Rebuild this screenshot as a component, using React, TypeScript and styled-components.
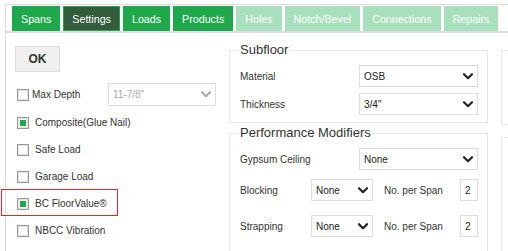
import styled, { createGlobalStyle } from "styled-components";

const GlobalStyle = createGlobalStyle`
    body {
        margin: 0;
        font-family: "Liberation Sans", Arial, sans-serif;
        color: #333;
        background: #fff;
    }
`

const Page = styled.div`
    position: relative;
    width: 508px;
    height: 251px;
    overflow: hidden;
`

const Frame = styled.div`
    margin: 4px 0 0 5px;
    border-top: 1px solid #dedede;
    border-left: 1px solid #dedede;
    height: 246px;
`

const TabBar = styled.div`
    display: flex;
    gap: 3px;
    padding: 1px 0 0 6px;
    border-bottom: 2px solid #dedede;
    white-space: nowrap;
    overflow: hidden;
`

const Tab = styled.div<{ $state: "on" | "off" | "active" }>`
    flex: none;
    height: 25px;
    box-sizing: border-box;
    padding: 0 8px;
    display: flex;
    align-items: center;
    font-size: 10.7px;
    color: #fff;
    background: ${p => p.$state === "active" ? "#325c3c" : p.$state === "on" ? "#1fa94c" : "#a8dfbc"};
    border: 1px solid ${p => p.$state === "off" ? "#a8dfbc" : "#1fa94c"};
`

const Content = styled.div`
    display: flex;
    align-items: flex-start;
`

const LeftCol = styled.div`
    width: 223px;
    flex: none;
    box-sizing: border-box;
    padding: 13px 0 0 9px;
`

const OkButton = styled.button`
    width: 45px;
    height: 26px;
    background: #f0f0f0;
    border: 1px solid #ddd;
    font-family: inherit;
    font-size: 12px;
    font-weight: bold;
    color: #333;
    padding: 0;
`

const DepthRow = styled.div`
    margin-top: 11px;
    height: 23px;
    display: grid;
    grid-template-columns: 93px 108px;
    align-items: center;
`

const CheckLabel = styled.div<{ $gap: number }>`
    display: flex;
    align-items: center;
    font-size: 10px;
    color: #333;
    gap: ${p => p.$gap}px;
    padding-left: 2px;
`

const CheckList = styled.div`
    margin-top: 3px;
`

const CheckRow = styled.div`
    height: 27px;
    display: flex;
    align-items: center;
`

const Box = styled.span<{ $checked?: boolean }>`
    width: 12px;
    height: 12px;
    box-sizing: border-box;
    border: 1px solid #999;
    box-shadow: inset 0 0 0 1px #e2e2e2;
    padding: 2px;
    display: inline-flex;
    background: #fff;

    &::after {
        content: "";
        flex: 1;
        background: ${p => p.$checked ? "#1fa94c" : "transparent"};
    }
`

const MidCol = styled.div`
    width: 259px;
    flex: none;
`

const Fieldset = styled.fieldset<{ $top: number }>`
    margin: ${p => p.$top}px 0 0 0;
    padding: 7px 9px 7px 8px;
    border: 1px solid #e6e6e6;
    min-width: 0;
`

const Legend = styled.legend`
    padding: 0 2px;
    font-size: 13px;
    line-height: 16px;
    color: #333;
`

const Row = styled.div<{ $top?: number }>`
    display: flex;
    align-items: center;
    height: 22px;
    margin-top: ${p => p.$top ?? 0}px;
    font-size: 10px;
`

const Label = styled.span<{ $width?: number; $indent?: number }>`
    width: ${p => p.$width ? `${p.$width}px` : "auto"};
    flex: ${p => p.$width ? "none" : "1"};
    padding-left: 2px;
    margin-left: ${p => p.$indent ?? 0}px;
    color: #333;
`

const SelectBox = styled.div<{ $width: number; $disabled?: boolean }>`
    width: ${p => p.$width}px;
    height: 100%;
    box-sizing: border-box;
    border: 1px solid #ddd;
    background: #fff;
    display: flex;
    align-items: center;
    justify-content: space-between;
    padding: 0 4px;
    font-size: 10px;
    color: ${p => p.$disabled ? "#aaa" : "#222"};
`

const NumInput = styled.div`
    width: 18px;
    height: 100%;
    box-sizing: border-box;
    border: 1px solid #ddd;
    display: flex;
    align-items: center;
    padding-left: 4px;
    font-size: 10px;
    color: #222;
`

const RightCol = styled.div`
    flex: 1;
    margin-left: 13px;
`

const SideBox = styled.div<{ $top: number; $height: number }>`
    margin-top: ${p => p.$top}px;
    height: ${p => p.$height}px;
    border: 1px solid #e6e6e6;
    border-right: none;
`

// annotation frame drawn over the BC FloorValue row
const Highlight = styled.div`
    position: absolute;
    left: 1px;
    top: 189px;
    width: 117px;
    height: 27px;
    box-shadow: inset 0 0 0 1px #e8232b;
    pointer-events: none;
`

const Chevron = ({ color = "#222" }: { color?: string }) => (
    <svg width="10" height="7" viewBox="0 0 10 7">
        <polyline points="1,1.2 5,5.2 9,1.2" fill="none" stroke={color} strokeWidth="2.2" strokeLinecap="round" strokeLinejoin="round" />
    </svg>
)

const Select = ({ value, width, disabled }: { value: string; width: number; disabled?: boolean }) => (
    <SelectBox $width={width} $disabled={disabled}>
        <span>{value}</span>
        <Chevron color={disabled ? "#aaa" : "#222"} />
    </SelectBox>
)

const tabs: { name: string; state: "on" | "off" | "active" }[] = [
    { name: "Spans", state: "on" },
    { name: "Settings", state: "active" },
    { name: "Loads", state: "on" },
    { name: "Products", state: "on" },
    { name: "Holes", state: "off" },
    { name: "Notch/Bevel", state: "off" },
    { name: "Connections", state: "off" },
    { name: "Repairs", state: "off" },
]

const options = [
    { label: "Composite(Glue Nail)", checked: true },
    { label: "Safe Load", checked: false },
    { label: "Garage Load", checked: false },
    { label: "BC FloorValue®", checked: true },
    { label: "NBCC Vibration", checked: false },
]

const App = () => {
    return (
        <Page>
            <GlobalStyle />
            <Frame>
                <TabBar>
                    {tabs.map(t => <Tab key={t.name} $state={t.state}>{t.name}</Tab>)}
                </TabBar>
                <Content>
                    <LeftCol>
                        <OkButton>OK</OkButton>
                        <DepthRow>
                            <CheckLabel $gap={3}><Box />Max Depth</CheckLabel>
                            <Select value={'11-7/8"'} width={108} disabled />
                        </DepthRow>
                        <CheckList>
                            {options.map(o => (
                                <CheckRow key={o.label}>
                                    <CheckLabel $gap={6}><Box $checked={o.checked} />{o.label}</CheckLabel>
                                </CheckRow>
                            ))}
                        </CheckList>
                    </LeftCol>
                    <MidCol>
                        <Fieldset $top={9}>
                            <Legend>Subfloor</Legend>
                            <Row>
                                <Label>Material</Label>
                                <Select value="OSB" width={119} />
                            </Row>
                            <Row $top={6}>
                                <Label>Thickness</Label>
                                <Select value={'3/4"'} width={119} />
                            </Row>
                        </Fieldset>
                        <Fieldset $top={2}>
                            <Legend>Performance Modifiers</Legend>
                            <Row>
                                <Label>Gypsum Ceiling</Label>
                                <Select value="None" width={119} />
                            </Row>
                            <Row $top={9}>
                                <Label $width={71}>Blocking</Label>
                                <Select value="None" width={62} />
                                <Label $indent={9}>No. per Span</Label>
                                <NumInput>2</NumInput>
                            </Row>
                            <Row $top={14}>
                                <Label $width={71}>Strapping</Label>
                                <Select value="None" width={62} />
                                <Label $indent={9}>No. per Span</Label>
                                <NumInput>2</NumInput>
                            </Row>
                            <Row $top={10} />
                        </Fieldset>
                    </MidCol>
                    <RightCol>
                        <SideBox $top={17} $height={73} />
                        <SideBox $top={12} $height={140} />
                    </RightCol>
                </Content>
            </Frame>
            <Highlight />
        </Page>
    );
}

export default App;
